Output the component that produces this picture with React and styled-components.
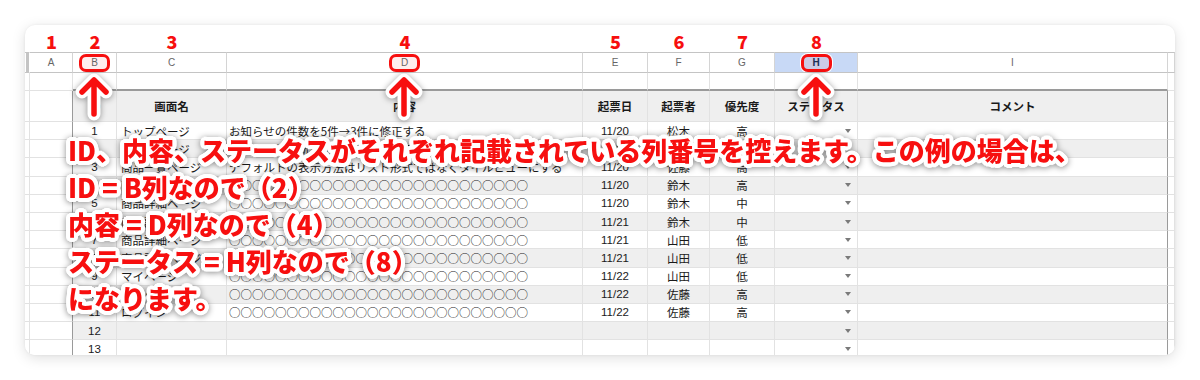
import React from 'react'
import styled, { createGlobalStyle } from 'styled-components'

const COLS = '5px 43px 44px 110px 356px 65px 62px 65px 83px 310px 7px'
const RED = '#f70f0f'
const LINE = '#e2e2e2'
const EDGE = '#9a9a9a'
const CIRCLES = '○'.repeat(26)

const letters = ['', 'A', 'B', 'C', 'D', 'E', 'F', 'G', 'H', 'I', '']
const marked = ['B', 'D', 'H']
const heads = ['', '', 'ID', '画面名', '内容', '起票日', '起票者', '優先度', 'ステータス', 'コメント', '']

const rows = [
   [1, 'トップページ', 'お知らせの件数を5件→3件に修正する', '11/20', '松木', '高'],
   [2, 'トップページ', 'バナー画像を新しいものに差し替える', '11/20', '松木', '中'],
   [3, '商品一覧ページ', 'デフォルトの表示方法はリスト形式ではなくタイルビューにする', '11/20', '佐藤', '高'],
   [4, '商品一覧ページ', CIRCLES, '11/20', '鈴木', '高'],
   [5, '商品詳細ページ', CIRCLES, '11/20', '鈴木', '中'],
   [6, '商品詳細ページ', CIRCLES, '11/21', '鈴木', '中'],
   [7, '商品詳細ページ', CIRCLES, '11/21', '山田', '低'],
   [8, '商品詳細ページ', CIRCLES, '11/21', '山田', '低'],
   [9, 'マイページ', CIRCLES, '11/22', '山田', '低'],
   [10, 'マイページ', CIRCLES, '11/22', '佐藤', '高'],
   [11, 'ログイン', CIRCLES, '11/22', '佐藤', '高'],
   [12, '', '', '', '', ''],
   [13, '', '', '', '', ''],
]

const arrows = [94, 404, 816]

const lines = [
   'ID、内容、ステータスがそれぞれ記載されている列番号を控えます。この例の場合は、',
   'ID = B列なので（2）',
   '内容 = D列なので（4）',
   'ステータス = H列なので（8）',
   'になります。',
]

// white outline built from a ring of hard shadows
const ring = r => {
   const s = []
   for (let i = 0; i < 24; i++) {
      const a = (i / 24) * Math.PI * 2
      s.push(`${(Math.cos(a) * r).toFixed(2)}px ${(Math.sin(a) * r).toFixed(2)}px 0 #fff`)
   }
   return s.join(', ')
}

const GlobalStyle = createGlobalStyle`
   body {
      margin: 0;
      background: #fff;
   }
`

const Page = styled.div`
   width: 1200px;
   height: 380px;
   padding: 25px;
   box-sizing: border-box;
`

const Card = styled.div`
   position: relative;
   width: 1150px;
   height: 330px;
   background: #fff;
   border-radius: 10px;
   overflow: hidden;
   box-shadow: 0 3px 14px rgba(0, 0, 0, 0.13), 0 0 3px rgba(0, 0, 0, 0.06);
   font-family: 'Liberation Sans', 'Noto Sans CJK JP', sans-serif;
   font-size: 11.5px;
   color: #222;
`

const Row = styled.div`
   display: grid;
   grid-template-columns: ${COLS};
   height: ${p => p.$h}px;
`

const Num = styled.div`
   display: flex;
   justify-content: center;
   align-items: flex-end;
   padding-bottom: 1px;
   color: ${RED};
   font-family: 'Noto Sans CJK JP', sans-serif;
   font-weight: 900;
   font-size: 18px;
   line-height: 20px;
   text-shadow: ${ring(1.5)};
`

const Cell = styled.div`
   box-sizing: border-box;
   display: flex;
   align-items: center;
   justify-content: ${p => p.$align || 'center'};
   padding: 0 ${p => p.$pr || 0}px 0 ${p => p.$pl || 0}px;
   overflow: hidden;
   white-space: nowrap;
   background: ${p => p.$bg || '#fff'};
   border-right: 1px solid ${p => p.$rb || LINE};
   border-bottom: ${p => p.$bw || 1}px solid ${p => p.$bb || LINE};
   border-top: ${p => (p.$top ? `1px solid #c4c4c4` : 'none')};
   font-weight: ${p => (p.$bold ? 700 : 400)};
   font-family: ${p =>
      p.$jp ? "'Noto Sans CJK JP', 'Liberation Sans', sans-serif" : 'inherit'};
   font-size: ${p => p.$size || 11.5}px;
   color: ${p => p.$color || '#1a1a1a'};
`

const Stub = styled.div`
   width: 3px;
   height: 100%;
   background: #c4c4c4;
`

const Marker = styled.span`
   box-sizing: border-box;
   display: flex;
   align-items: center;
   justify-content: center;
   width: 31px;
   height: 18px;
   border: 3px solid ${RED};
   border-radius: 7px;
   background: rgba(255, 40, 40, 0.08);
   box-shadow: 0 0 0 1px #fff;
`

const Drop = styled.span`
   width: 0;
   height: 0;
   border-left: 3.5px solid transparent;
   border-right: 3.5px solid transparent;
   border-top: 4px solid #7a7a7a;
`

const Overlay = styled.div`
   position: absolute;
   inset: 0;
   pointer-events: none;
`

const Arrow = styled.svg`
   position: absolute;
   top: 47px;
   filter: drop-shadow(0 1px 3px rgba(0, 0, 0, 0.4));
`

const Notes = styled.div`
   position: absolute;
   left: 43px;
   top: 106px;
   font-family: 'Noto Sans CJK JP', sans-serif;
   font-weight: 900;
   font-size: 26px;
   line-height: 37px;
   color: ${RED};
   white-space: nowrap;
   text-shadow: ${ring(4)};
   filter: drop-shadow(0 1px 3px rgba(0, 0, 0, 0.45));
`

const tableCell = (i, bg) => ({
   $bg: i >= 2 && i <= 9 ? bg : '#fff',
   $rb: i === 1 || i === 9 ? EDGE : LINE,
})

const App = () => {
   return (
      <Page>
         <GlobalStyle />
         <Card>
            <Row $h={27}>
               {letters.map((l, i) => (
                  <Num key={i}>{i >= 1 && i <= 8 ? i : ''}</Num>
               ))}
            </Row>

            <Row $h={21}>
               {letters.map((l, i) => (
                  <Cell
                     key={i}
                     $top
                     $bb="#c4c4c4"
                     $rb={i === 0 ? '#fff' : '#d4d4d4'}
                     $size={10}
                     $color={l === 'H' ? '#1d2f55' : '#666'}
                     $bold={l === 'H'}
                     $bg={l === 'H' ? '#c8d9f6' : '#fff'}
                  >
                     {i === 0 ? <Stub /> : marked.includes(l) ? <Marker>{l}</Marker> : l}
                  </Cell>
               ))}
            </Row>

            <Row $h={18}>
               {letters.map((l, i) => (
                  <Cell
                     key={i}
                     $bb={i >= 2 && i <= 9 ? EDGE : LINE}
                     $bw={i >= 2 && i <= 9 ? 2 : 1}
                  />
               ))}
            </Row>

            <Row $h={31}>
               {heads.map((h, i) => (
                  <Cell key={i} $jp $bold {...tableCell(i, '#efefef')}>
                     {h}
                  </Cell>
               ))}
            </Row>

            {rows.map(([id, page, content, date, by, pr]) => {
               const bg = id % 2 === 0 ? '#efefef' : '#fff'
               return (
                  <Row key={id} $h={18.2}>
                     <Cell {...tableCell(0, bg)} />
                     <Cell {...tableCell(1, bg)} />
                     <Cell {...tableCell(2, bg)}>{id}</Cell>
                     <Cell {...tableCell(3, bg)} $jp $align="flex-start" $pl={4}>
                        {page}
                     </Cell>
                     <Cell {...tableCell(4, bg)} $jp $align="flex-start" $pl={2}>
                        {content}
                     </Cell>
                     <Cell {...tableCell(5, bg)}>{date}</Cell>
                     <Cell {...tableCell(6, bg)} $jp>
                        {by}
                     </Cell>
                     <Cell {...tableCell(7, bg)} $jp>
                        {pr}
                     </Cell>
                     <Cell {...tableCell(8, bg)} $align="flex-end" $pr={6}>
                        <Drop />
                     </Cell>
                     <Cell {...tableCell(9, bg)} />
                     <Cell {...tableCell(10, bg)} />
                  </Row>
               )
            })}

            <Overlay>
               {arrows.map(x => (
                  <Arrow
                     key={x}
                     width="40"
                     height="50"
                     viewBox="0 0 40 50"
                     style={{ left: x - 25 - 20 }}
                  >
                     <g fill="none" strokeLinecap="round" strokeLinejoin="round">
                        <path d="M20 42V9M8 20L20 8L32 20" stroke="#fff" strokeWidth="13" />
                        <path d="M20 42V9M8 20L20 8L32 20" stroke={RED} strokeWidth="5.5" />
                     </g>
                  </Arrow>
               ))}
               <Notes>
                  {lines.map(t => (
                     <div key={t}>{t}</div>
                  ))}
               </Notes>
            </Overlay>
         </Card>
      </Page>
   )
}

export default App
